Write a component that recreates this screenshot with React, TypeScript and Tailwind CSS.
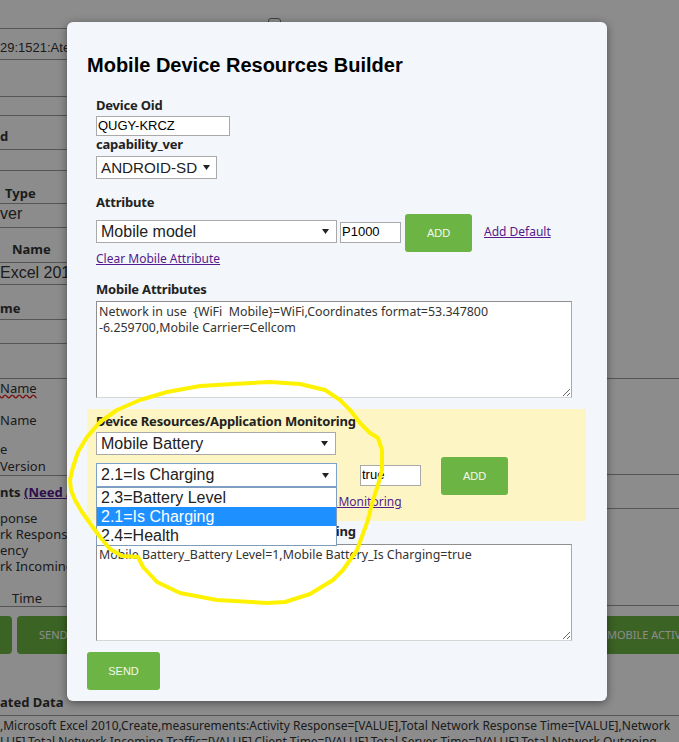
import React from "react";

const arial = "font-['Liberation_Sans',Arial,sans-serif]";

function Caret() {
  return (
    <svg width="7" height="5" viewBox="0 0 7 5" className="shrink-0">
      <path d="M0 0H7L3.5 5Z" fill="#222" />
    </svg>
  );
}

function Select({ value, className }: { value: string; className: string }) {
  return (
    <div
      className={`flex items-center justify-between bg-white border pl-[4px] leading-none text-[#222] ${arial} ${className}`}
    >
      <span>{value}</span>
      <Caret />
    </div>
  );
}

function Field({ value, className }: { value: string; className: string }) {
  return (
    <div
      className={`bg-white border border-[#a9a9a9] pl-[1px] text-[13px] leading-[18px] text-black ${arial} ${className}`}
    >
      {value}
    </div>
  );
}

function GreenButton({ label, className }: { label: string; className: string }) {
  return (
    <div
      className={`flex shrink-0 items-center justify-center rounded-[3px] bg-[#6cb443] text-[11px] text-[#f4f8f0] ${arial} ${className}`}
    >
      {label}
    </div>
  );
}

function Label({ children, className = "" }: { children: React.ReactNode; className?: string }) {
  return (
    <div className={`text-[13px] leading-[17px] font-bold tracking-[-0.2px] text-[#222] ${className}`}>
      {children}
    </div>
  );
}

function Row({
  h,
  className = "",
  children,
}: {
  h: string;
  className?: string;
  children?: React.ReactNode;
}) {
  return <div className={`border-b border-[#9b9b9b] whitespace-nowrap ${h} ${className}`}>{children}</div>;
}

const areaClass =
  "block w-[476px] h-[97px] border border-t-[#8f8f8f] border-l-[#8f8f8f] border-r-[#aaaaaa] border-b-[#d6d6d6] bg-white px-[2px] py-[2px] text-[12.4px] leading-[16px] text-[#333] outline-none";

const options = ["2.3=Battery Level", "2.1=Is Charging", "2.4=Health"];

export default function App() {
  return (
    <div className="relative w-[679px] h-[742px] overflow-hidden bg-white font-['Noto_Sans',sans-serif] text-[13px] text-[#333]">
      {/* page behind the dialog */}
      <div className="flex flex-col">
        <div className="h-[28px] pl-[268px] pt-[18px]">
          <div className="w-[13px] h-[13px] rounded-[3px] border border-[#767676] bg-white" />
        </div>

        <div className="flex">
          <div className="w-[300px] overflow-hidden border-t border-[#9b9b9b]">
            <Row h="h-[31px]" className={`pt-[11px] text-[13px] leading-[15px] ${arial}`}>
              29:1521:Aternity_DB
            </Row>
            <Row h="h-[37px]" />
            <Row h="h-[19px]" />
            <Row h="h-[34px]" className="pt-[12px] font-bold leading-[17px]">
              d
            </Row>
            <Row h="h-[21px]" />
            <Row h="h-[33px]" className="pt-[14px] pl-[5px] font-bold leading-[17px]">
              Type
            </Row>
            <Row h="h-[24px]" className={`pt-[1px] text-[16px] leading-[18px] ${arial}`}>
              ver
            </Row>
            <Row h="h-[35px]" className="pt-[13px] pl-[12px] font-bold leading-[17px]">
              Name
            </Row>
            <Row h="h-[22px]" className={`pt-[1px] text-[16px] leading-[18px] ${arial}`}>
              Excel 2010
            </Row>
            <Row h="h-[35px]" className="pt-[15px] font-bold leading-[17px]">
              me
            </Row>
            <Row h="h-[24px]" />
            <Row h="h-[35px]" />
            <Row h="h-[97px]" className="pt-[1px] leading-[17px]">
              <div className="underline decoration-wavy decoration-[#e02020]">Name</div>
              <div className="mt-[15px]">Name</div>
              <div className="mt-[12px]">e</div>
              <div>Version</div>
            </Row>
            <Row h="h-[131px]" className="pt-[8px]">
              <div className="font-bold leading-[17px]">
                nts <span className="text-[#551a8b] underline">(Need Attention)</span>
              </div>
              <div className="mt-[9px] leading-[16px]">
                <div>ponse</div>
                <div>rk Response</div>
                <div>ency</div>
                <div>rk Incoming</div>
              </div>
              <div className="mt-[16px] pl-[12px] leading-[16px]">Time</div>
            </Row>
          </div>
          <div className="flex-1">
            <Row h="h-[351px]" />
            <Row h="h-[96px]" />
            <Row h="h-[34px]" />
            <Row h="h-[97px]" />
          </div>
        </div>

        <div className="mt-[9px] flex h-[38px] whitespace-nowrap text-[11px] text-white">
          <div className="w-[12px] shrink-0 rounded-r-[4px] bg-[#6cb443]" />
          <div className="ml-[5px] flex w-[100px] shrink-0 items-center rounded-[4px] bg-[#6cb443] pl-[22px]">SEND</div>
          <div className="ml-[479px] flex w-[120px] shrink-0 items-center rounded-[4px] bg-[#6cb443] pl-[11px]">
            MOBILE ACTIVITY
          </div>
        </div>

        <div className="mt-[40px] h-[22px] border-b border-[#9b9b9b] font-bold leading-[17px]">ated Data</div>
        <div className="mt-[2px] whitespace-nowrap text-[12px] leading-[16px]">
          <div>,Microsoft Excel 2010,Create,measurements:Activity Response=[VALUE],Total Network Response Time=[VALUE],Network</div>
          <div>LUE],Total Network Incoming Traffic=[VALUE],Client Time=[VALUE],Total Server Time=[VALUE],Total Network Outgoing</div>
        </div>
      </div>

      {/* dim overlay */}
      <div className="absolute inset-0 bg-black/45" />

      {/* dialog */}
      <div className="absolute left-[67px] top-[22px] w-[540px] h-[679px] rounded-[6px] bg-[#f3f6fa] pl-[20px] pt-[32px] shadow-[0_2px_8px_rgba(0,0,0,0.45)]">
        <h2 className={`text-[20px] leading-[23px] font-bold text-black ${arial}`}>
          Mobile Device Resources Builder
        </h2>

        <div className="mt-[20px] w-[499px]">
          <div className="pl-[9px]">
            <Label>Device Oid</Label>
            <Field value="QUGY-KRCZ" className="mt-[2px] w-[134px] h-[20px]" />
            <Label>capability_ver</Label>
            <Select
              value="ANDROID-SD"
              className="mt-[3px] w-[121px] h-[23px] pr-[6px] text-[15.2px] border-[#a9a9a9]"
            />

            <Label className="mt-[15px]">Attribute</Label>
            <div className="mt-[3px] flex h-[38px] items-start">
              <Select
                value="Mobile model"
                className="mt-[6px] w-[241px] h-[23px] pr-[7px] text-[16px] border-[#a9a9a9]"
              />
              <Field value="P1000" className="ml-[3px] mt-[8px] w-[61px] h-[21px]" />
              <GreenButton label="ADD" className="ml-[4px] w-[67px] h-[38px]" />
              <a className="ml-[12px] mt-[10px] text-[12px] leading-[16px] text-[#551a8b] underline">Add Default</a>
            </div>
            <a className="-mt-px block w-max text-[12px] leading-[16px] text-[#551a8b] underline">
              Clear Mobile Attribute
            </a>

            <Label className="mt-[14px]">Mobile Attributes</Label>
            <textarea
              readOnly
              className={`mt-[3px] ${areaClass}`}
              value={"Network in use  {WiFi  Mobile}=WiFi,Coordinates format=53.347800 -6.259700,Mobile Carrier=Cellcom"}
            />
          </div>

          <div className="mt-[11px] bg-[#fdf6c4] pl-[9px] pt-[4px] pb-[11px]">
            <Label>Device Resources/Application Monitoring</Label>
            <Select
              value="Mobile Battery"
              className="mt-[2px] w-[240px] h-[23px] pr-[7px] text-[16px] border-[#a9a9a9]"
            />
            <div className="mt-[2px] flex h-[38px] items-start">
              <div className="relative mt-[6px] shrink-0">
                <Select
                  value="2.1=Is Charging"
                  className="w-[241px] h-[24px] pr-[7px] text-[16px] border-[#7da2ce]"
                />
                <div
                  className={`absolute left-0 top-full z-10 w-[241px] border border-[#7f9db9] bg-white text-[16px] leading-[19px] text-[#222] ${arial}`}
                >
                  {options.map((o) => (
                    <div
                      key={o}
                      className={o === "2.1=Is Charging" ? "h-[19px] bg-[#1e90ff] pl-[4px] text-white" : "h-[19px] pl-[4px]"}
                    >
                      {o}
                    </div>
                  ))}
                </div>
              </div>
              <Field value="true" className="ml-[23px] mt-[8px] w-[61px] h-[21px]" />
              <GreenButton label="ADD" className="ml-[20px] w-[67px] h-[38px]" />
            </div>
            <a className="-mt-px block w-max text-[12px] leading-[16px] text-[#551a8b] underline">
              Clear Mobile Device Resources/Application Monitoring
            </a>
          </div>

          <div className="pl-[9px]">
            <Label className="mt-[2px]">Device Resources/Application Monitoring</Label>
            <textarea
              readOnly
              className={`mt-[4px] ${areaClass}`}
              value="Mobile Battery_Battery Level=1,Mobile Battery_Is Charging=true"
            />
          </div>
        </div>

        <GreenButton label="SEND" className="mt-[11px] w-[73px] h-[38px]" />
      </div>

      {/* hand-drawn highlight */}
      <svg className="pointer-events-none absolute inset-0 z-20" width="679" height="742">
        <path
          d="M233 384 L200 386 L167 392 L140 400 L117 410 L100 422 L87 437 L78 452 L73 467 L70 480 L71 490 L75 500 L82 512 L92 526 L100 537 L110 549 L122 556 L138 557 L143 567 L157 582 L180 593 L217 600 L267 603 L285 602 L310 594 L333 580 L343 570 L357 550 L368 520 L373 500 L378 485 L382 470 L382 450 L378 438 L370 433 L360 423 L350 410 L340 400 L325 390 L300 384 L270 382 Z"
          fill="none"
          stroke="#fff200"
          strokeWidth="4"
          strokeLinejoin="round"
          strokeLinecap="round"
        />
      </svg>
    </div>
  );
}
